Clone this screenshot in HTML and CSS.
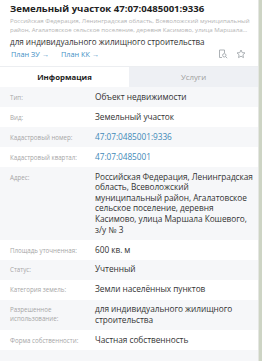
FILE: index.html
```html
<!DOCTYPE html>
<html lang="ru">
<head>
<meta charset="utf-8">
<link rel="stylesheet" href="styles.css">
</head>
<body>
<div class="panel">
  <div class="head">
    <div class="title">Земельный участок 47:07:0485001:9336</div>
    <div class="addr">Российская Федерация, Ленинградская область, Всеволожский муниципальный район, Агалатовское сельское поселение, деревня Касимово, улица Маршала Кошевого, з/у № 3</div>
    <div class="purpose">для индивидуального жилищного строительства</div>
    <div class="links">
      <span class="link">План ЗУ →</span>
      <span class="link">План КК →</span>
      <span class="icons">
        <svg width="10" height="10" viewBox="0 0 10 10" fill="none" stroke="#a4a9ae" stroke-width="0.9">
          <path d="M6.5 1H1.5v7.5H4"/>
          <path d="M6.5 1v3"/>
          <circle cx="6.3" cy="6.3" r="1.7"/>
          <path d="M7.5 7.5L9.2 9.2"/>
        </svg>
        <svg width="10" height="10" viewBox="0 0 10 10" fill="none" stroke="#a4a9ae" stroke-width="0.9" stroke-linejoin="round">
          <path d="M5 1l1.2 2.6 2.8.3-2.1 1.9.6 2.8L5 7.2 2.5 8.6l.6-2.8L1 3.9l2.8-.3z"/>
        </svg>
      </span>
    </div>
  </div>
  <div class="tabs">
    <div class="tab active">Информация</div>
    <div class="tab">Услуги</div>
  </div>
  <div class="rows">
    <div class="row"><div class="lbl">Тип:</div><div class="val">Объект недвижимости</div></div>
    <div class="row"><div class="lbl">Вид:</div><div class="val">Земельный участок</div></div>
    <div class="row"><div class="lbl">Кадастровый номер:</div><div class="val blue">47:07:0485001:9336</div></div>
    <div class="row"><div class="lbl">Кадастровый квартал:</div><div class="val blue">47:07:0485001</div></div>
    <div class="row"><div class="lbl">Адрес:</div><div class="val nowrap">Российская Федерация, Ленинградская<br>область, Всеволожский<br>муниципальный район, Агалатовское<br>сельское поселение, деревня<br>Касимово, улица Маршала Кошевого,<br>з/у № 3</div></div>
    <div class="row"><div class="lbl">Площадь уточненная:</div><div class="val">600 кв. м</div></div>
    <div class="row"><div class="lbl">Статус:</div><div class="val">Учтенный</div></div>
    <div class="row"><div class="lbl">Категория земель:</div><div class="val">Земли населённых пунктов</div></div>
    <div class="row"><div class="lbl">Разрешенное использование:</div><div class="val">для индивидуального жилищного строительства</div></div>
    <div class="row"><div class="lbl">Форма собственности:</div><div class="val">Частная собственность</div></div>
    <div class="row"><div class="lbl"></div><div class="val"></div></div>
  </div>
</div>
</body>
</html>
```
FILE: styles.css
```css
html, body {
  margin: 0;
  padding: 0;
}
body {
  width: 262px;
  height: 361px;
  overflow: hidden;
  background: #cdd4c4;
  font-family: "Open Sans", "Noto Sans", sans-serif;
  color: #333;
}
.panel {
  width: 259px;
  height: 361px;
  background: #fff;
  border-right: 1px solid #e4e6e2;
  box-sizing: border-box;
  overflow: hidden;
}
.head {
  padding: 3px 8px 6px 10px;
}
.title {
  font-weight: 700;
  font-size: 9.6px;
  line-height: 12px;
  color: #222;
}
.addr {
  margin-top: 2px;
  font-size: 6.1px;
  line-height: 8.5px;
  color: #b4b4b4;
  display: -webkit-box;
  -webkit-line-clamp: 2;
  -webkit-box-orient: vertical;
  overflow: hidden;
}
.purpose {
  margin-top: 2px;
  font-size: 8.1px;
  line-height: 12px;
  color: #333;
}
.links {
  display: flex;
  align-items: center;
  height: 12px;
  gap: 12px;
  padding-left: 1px;
  padding-right: 4px;
}
.link {
  font-size: 7.3px;
  color: #3e8fc5;
}
.icons {
  margin-left: auto;
  display: flex;
  gap: 8px;
  align-items: center;
}
.icons svg {
  display: block;
}
.tabs {
  display: grid;
  grid-template-columns: 1fr 1fr;
  height: 21px;
  border-top: 1px solid #eceef1;
  box-sizing: border-box;
}
.tab {
  display: flex;
  align-items: center;
  justify-content: center;
  font-size: 7.8px;
  color: #9d9d9d;
  background: #eef0f4;
}
.tab.active {
  background: #fff;
  color: #222;
  font-weight: 700;
}
.row {
  display: grid;
  grid-template-columns: 80px 1fr;
  column-gap: 5px;
  padding: 4.7px 0 4.7px 10px;
  min-height: 10.6px;
}
.row:nth-child(odd) {
  background: #f6f7f9;
}
.lbl {
  font-size: 6.2px;
  line-height: 9px;
  padding-top: 1px;
  color: #a6a6a6;
}
.val {
  font-size: 8.3px;
  line-height: 10.6px;
  letter-spacing: -0.05px;
  color: #333;
}
.nowrap {
  white-space: nowrap;
}
.blue {
  color: #3f8ab8;
}
```
